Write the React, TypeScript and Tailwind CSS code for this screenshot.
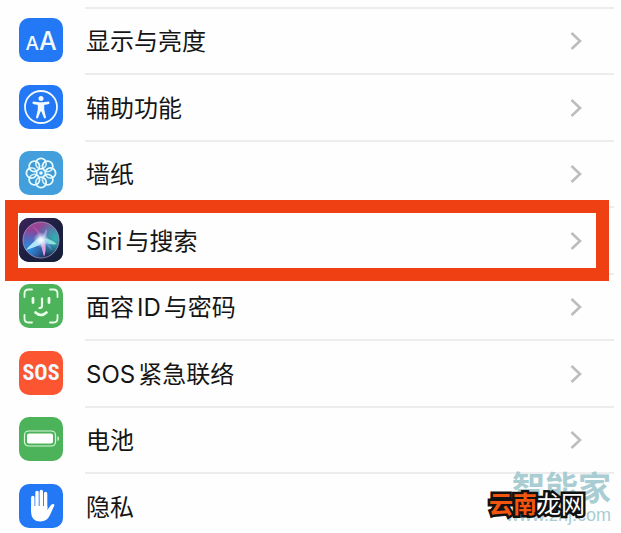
import type { ReactNode } from 'react'

const SiriIcon = () => (
    <svg viewBox="0 0 44 44" className="w-full h-full">
        <defs>
            <linearGradient id="siriBg" x1="0" y1="0" x2="1" y2="1">
                <stop offset="0" stopColor="#3c2459" />
                <stop offset="0.5" stopColor="#1d1f40" />
                <stop offset="1" stopColor="#14203a" />
            </linearGradient>
            <linearGradient id="siriOrb" x1="0.3" y1="0" x2="0.6" y2="1">
                <stop offset="0" stopColor="#a8418f" />
                <stop offset="0.45" stopColor="#6a4da8" />
                <stop offset="0.75" stopColor="#2a4b86" />
                <stop offset="1" stopColor="#1b2450" />
            </linearGradient>
            <radialGradient id="siriTeal" cx="0.9" cy="0.45" r="0.55">
                <stop offset="0" stopColor="#2fb3b0" />
                <stop offset="1" stopColor="#2fb3b0" stopOpacity="0" />
            </radialGradient>
            <radialGradient id="siriBlue" cx="0.15" cy="0.75" r="0.5">
                <stop offset="0" stopColor="#2f8fe0" />
                <stop offset="1" stopColor="#2f8fe0" stopOpacity="0" />
            </radialGradient>
            <radialGradient id="siriGlow">
                <stop offset="0" stopColor="#fff" />
                <stop offset="0.35" stopColor="#e4f4ff" stopOpacity="0.8" />
                <stop offset="1" stopColor="#b9d8ff" stopOpacity="0" />
            </radialGradient>
        </defs>
        <rect width="44" height="44" fill="url(#siriBg)" />
        <circle cx="22" cy="22" r="18" fill="url(#siriOrb)" />
        <circle cx="22" cy="22" r="18" fill="url(#siriTeal)" />
        <circle cx="22" cy="22" r="18" fill="url(#siriBlue)" />
        <circle cx="22" cy="22" r="18" fill="none" stroke="#a99cc8" strokeOpacity="0.75" />
        <path d="M22 19C16 22 11 27 7 32C13 30 20 28 25 24Z" fill="#b4ecfb" fillOpacity="0.95" />
        <path d="M21 22C22 28 24 34 25 39C27 34 27 27 26 22Z" fill="#f3a9e6" fillOpacity="0.9" />
        <path d="M24 20C29 20 34 23 38 26C34 27 28 26 23 24Z" fill="#9ff0e4" fillOpacity="0.85" />
        <path d="M24 22C27 26 30 30 33 33C32 28 29 24 26 21Z" fill="#7f9cf5" fillOpacity="0.6" />
        <path d="M21 22C20 17 17 12 13 8C19 11 23 16 25 21Z" fill="#ea72b8" fillOpacity="0.35" />
        <path d="M22 22C24 17 26 13 28 11C28 15 27 19 25 23Z" fill="#c9b2ff" fillOpacity="0.6" />
        <circle cx="22" cy="22" r="8" fill="url(#siriGlow)" />
    </svg>
)

const AccessibilityIcon = () => (
    <svg viewBox="0 0 44 44" className="w-full h-full" fill="#f2f9ff">
        <circle cx="22" cy="22" r="16" fill="none" stroke="#f2f9ff" strokeWidth="1.8" />
        <circle cx="22" cy="13.5" r="2.5" />
        <path d="M14 16.500L20 17.300H24L30 16.500Q31.200 18 30 19L25.200 20V24.500L27 32.500Q26.200 34 25 33L22.400 26.500H21.600L19 33Q17.800 34 17 32.500L18.800 24.500V20L14 19Q12.800 18 14 16.500Z" />
    </svg>
)

const WallpaperIcon = () => (
    <svg viewBox="0 0 44 44" className="w-full h-full" fill="#1f7fae" fillOpacity="0.15" stroke="#e6fbff" strokeWidth="1.8">
        {[0, 45, 90, 135, 180, 225, 270, 315].map((angle) => (
            <circle key={angle} cx="22" cy="12.6" r="5.2" transform={`rotate(${angle} 22 22)`} />
        ))}
        <circle cx="22" cy="22" r="1.8" fill="#e6fbff" fillOpacity="1" stroke="none" />
    </svg>
)

const FaceIcon = () => (
    <svg viewBox="0 0 44 44" className="w-full h-full" fill="none" stroke="#e9ffe9" strokeWidth="1.8" strokeLinecap="round">
        <path d="M5.500 13V9.500Q5.500 5.500 9.500 5.500H13M31 5.500H34.500Q38.500 5.500 38.500 9.500V13M38.500 31V34.500Q38.500 38.500 34.500 38.500H31M13 38.500H9.500Q5.500 38.500 5.500 34.500V31" />
        <path d="M14 14.500V18.500M30 14.500V18.500" strokeWidth="2.800" />
        <path d="M23 14.500V22Q23 24 20.500 24" strokeWidth="2.200" />
        <path d="M16.500 28.500Q22 33.500 27.500 28.500" strokeWidth="2.600" />
    </svg>
)

const BatteryIcon = () => (
    <svg viewBox="0 0 44 44" className="w-full h-full">
        <rect x="5.500" y="14" width="31" height="15" rx="4" fill="none" stroke="#d9f7d9" strokeWidth="1.200" />
        <rect x="8" y="16.500" width="26" height="10" rx="2" fill="#fff" />
        <path d="M38.500 19Q40 19.500 40 21.500T38.500 24Z" fill="#d9f7d9" />
    </svg>
)

const HandIcon = () => (
    <svg viewBox="0 0 44 44" className="w-full h-full">
        <g stroke="#fff" strokeWidth="3.400" strokeLinecap="round">
            <path d="M13.800 13.500V27M18 8.500V24M22.300 7.500V24M26.600 9.500V25" />
        </g>
        <path d="M12.100 22H28.300V26L32 21Q34.500 19 35.500 21L31 31Q28 37.500 21.500 37.500Q12.100 37.500 12.100 28Z" fill="#fff" />
    </svg>
)

interface Setting {
    label: string
    color: string
    icon: ReactNode
    active?: boolean
}

export default function App() {
    const settings: Setting[] = [
        {
            label: '显示与亮度',
            color: 'bg-[#2379f5]',
            icon: (
                <span className="flex items-baseline pt-1">
                    <span className="text-[19px]">A</span>
                    <span className="text-[25px]">A</span>
                </span>
            )
        },
        { label: '辅助功能', color: 'bg-[#2379f5]', icon: <AccessibilityIcon /> },
        { label: '墙纸', color: 'bg-[#429fdc]', icon: <WallpaperIcon /> },
        { label: 'Siri与搜索', color: 'bg-[#1d1f40]', icon: <SiriIcon />, active: true },
        { label: '面容ID与密码', color: 'bg-[#4db35b]', icon: <FaceIcon /> },
        {
            label: 'SOS紧急联络',
            color: 'bg-[#fc5532]',
            icon: <span className="font-['Liberation_Sans_Narrow','Roboto_Condensed','Roboto'] text-[22px] font-bold">SOS</span>
        },
        { label: '电池', color: 'bg-[#4db35b]', icon: <BatteryIcon /> },
        { label: '隐私', color: 'bg-[#2379f5]', icon: <HandIcon /> }
    ]

    return (
        <main className="relative min-h-screen overflow-hidden bg-[#fefefe] pt-[7px] font-['Inter','Noto_Sans_CJK_SC',sans-serif]">
            <ul>
                {settings.map((item) => (
                    <li key={item.label} className="relative h-[66px] even:h-[67px]">
                        <a href="#" className="flex h-full items-center pl-[19px] pr-[7px]">
                            <span className={`flex size-[44px] shrink-0 items-center justify-center overflow-hidden rounded-[10px] font-medium text-[#f2f9ff] ${item.color}`}>
                                {item.icon}
                            </span>
                            <span className="ml-[22px] flex h-full flex-1 items-center justify-between border-t-2 border-[#ededed] pl-px pr-8 text-[24px] text-[#151515]">
                                <span className="pt-0.5 [text-autospace:normal]">{item.label}</span>
                                <svg className="h-5 w-3" viewBox="0 0 12 20" fill="none" stroke="#bdbdbf" strokeWidth="2.6">
                                    <path d="M1.500 2L10 10L1.500 18" />
                                </svg>
                            </span>
                        </a>
                        {item.active && (
                            <div className="pointer-events-none absolute -top-[6px] -bottom-2 left-[5px] right-3 z-10 border-[13px] border-[#ef4014]" />
                        )}
                    </li>
                ))}
            </ul>

            {/* Watermarks */}
            <div className="absolute right-[10px] bottom-[14px] text-right text-[#a9cdd2]">
                <p className="text-[33px] leading-[34px] font-bold">智能家</p>
                <p className="font-['Liberation_Sans'] text-[18px] leading-[20px]">www.znj.com</p>
            </div>
            <p className="absolute right-9 bottom-[18px] text-[24px] leading-[32px] text-white [-webkit-text-stroke:5px_#111] [paint-order:stroke_fill]">
                <span className="font-bold text-[#f2560e]">云南</span>龙网
            </p>
        </main>
    )
}
